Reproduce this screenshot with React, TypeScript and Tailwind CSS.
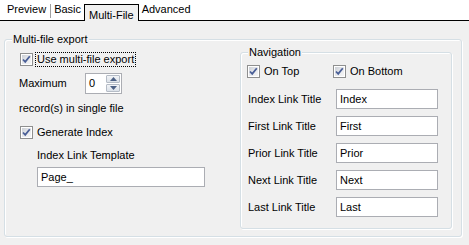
import React from "react";

const font = { fontFamily: '"Liberation Sans", Arial, sans-serif' };

function Check() {
  return (
    <div className="w-[13px] h-[13px] shrink-0 border border-[#8e8f8f] bg-white p-[1px]">
      <div className="w-full h-full bg-gradient-to-br from-[#cbcfd5] via-[#e6e8ec] to-[#f6f6f6] flex items-center justify-center">
        <svg width="9" height="9" viewBox="0 0 9 9">
          <path d="M1 4.5 L3.2 6.8 L7.8 1.2" fill="none" stroke="#4a5f97" strokeWidth="1.8" />
        </svg>
      </div>
    </div>
  );
}

function TextBox({ value, w }: { value: string; w: string }) {
  return (
    <div className={`${w} h-[20px] border border-[#abadb3] bg-white flex items-center pl-[3px] text-[11px] text-black`}>
      {value}
    </div>
  );
}

function Spinner() {
  return (
    <div className="w-[37px] h-[21px] border border-[#abadb3] bg-white flex items-center">
      <span className="pl-[3px] flex-1 text-[11px]">0</span>
      <div className="w-[15px] h-full flex flex-col py-[1px] pr-[1px] gap-[1px]">
        <div className="flex-1 rounded-[1px] border border-[#b5bcc6] bg-gradient-to-b from-[#f2f4f7] to-[#dbe1e8] flex items-center justify-center">
          <svg width="7" height="4" viewBox="0 0 7 4"><path d="M0 4 L3.5 0 L7 4 Z" fill="#4d6185" /></svg>
        </div>
        <div className="flex-1 rounded-[1px] border border-[#b5bcc6] bg-gradient-to-b from-[#f2f4f7] to-[#dbe1e8] flex items-center justify-center">
          <svg width="7" height="4" viewBox="0 0 7 4"><path d="M0 0 L3.5 4 L7 0 Z" fill="#4d6185" /></svg>
        </div>
      </div>
    </div>
  );
}

function NavRow({ label, value }: { label: string; value: string }) {
  return (
    <div className="flex items-center h-[20px]">
      <span className="w-[88px] text-[11px]">{label}</span>
      <TextBox value={value} w="w-[102px]" />
    </div>
  );
}

export default function App() {
  return (
    <div className="w-[469px] h-[245px] bg-[#f0f0f0] text-black text-[11px] overflow-hidden" style={font}>
      {/* Tab strip */}
      <div className="h-[21px] bg-white flex items-end border-b border-black">
        <div className="flex items-end h-full">
          <span className="pl-[7px] pr-[4px] pb-[3px]">Preview</span>
          <span className="w-px h-[14px] bg-[#a0a0a0] mb-[2px]" />
          <span className="pl-[3px] pr-[3px] pb-[3px]">Basic</span>
          <div className="h-[17px] border border-b-0 border-black bg-[#f0f0f0] px-[4px] mb-[-1px] pt-[2px] flex items-start">
            <span>Multi-File</span>
          </div>
          <span className="pl-[3px] pb-[3px]">Advanced</span>
        </div>
      </div>

      {/* Group box */}
      <div className="ml-[4px] mt-[18px] w-[458px] h-[198px] relative border border-[#d5dfe5] rounded-[3px] shadow-[inset_1px_1px_0_#ffffff,1px_1px_0_#ffffff]">
        <span className="absolute left-[7px] top-[-8px] bg-[#f0f0f0] px-[1px] leading-[14px]">Multi-file export</span>
        <div className="flex">
          {/* Left column */}
          <div className="w-[235px] pl-[14px] pt-[13px] flex flex-col">
            <div className="flex items-center h-[13px] pl-[1px]">
              <Check />
              <span className="ml-[2px] border border-dotted border-black px-[1px] leading-[13px]">Use multi-file export</span>
            </div>
            <div className="flex items-center h-[21px] mt-[7px]">
              <span className="w-[66px]">Maximum</span>
              <Spinner />
            </div>
            <div className="mt-[8px] leading-[13px]">record(s) in single file</div>
            <div className="flex items-center h-[13px] mt-[11px] pl-[1px]">
              <Check />
              <span className="ml-[4px] leading-[13px]">Generate Index</span>
            </div>
            <div className="mt-[10px] leading-[13px] pl-[18px]">Index Link Template</div>
            <div className="mt-[5px] pl-[18px]">
              <TextBox value="Page_" w="w-[168px]" />
            </div>
          </div>
          {/* Navigation group */}
          <div className="mt-[12px] w-[212px] h-[177px] relative border border-[#d5dfe5] rounded-[3px] shadow-[inset_1px_1px_0_#ffffff,1px_1px_0_#ffffff]">
            <span className="absolute left-[7px] top-[-8px] bg-[#f0f0f0] px-[1px] leading-[14px]">Navigation</span>
            <div className="pl-[6px] pt-[12px] flex flex-col">
              <div className="flex items-center h-[13px]">
                <Check />
                <span className="ml-[4px] w-[69px]">On Top</span>
                <Check />
                <span className="ml-[4px]">On Bottom</span>
              </div>
              <div className="flex flex-col gap-[7px] mt-[11px] pl-[1px]">
                <NavRow label="Index Link Title" value="Index" />
                <NavRow label="First Link Title" value="First" />
                <NavRow label="Prior Link Title" value="Prior" />
                <NavRow label="Next Link Title" value="Next" />
                <NavRow label="Last Link Title" value="Last" />
              </div>
            </div>
          </div>
        </div>
      </div>
    </div>
  );
}
